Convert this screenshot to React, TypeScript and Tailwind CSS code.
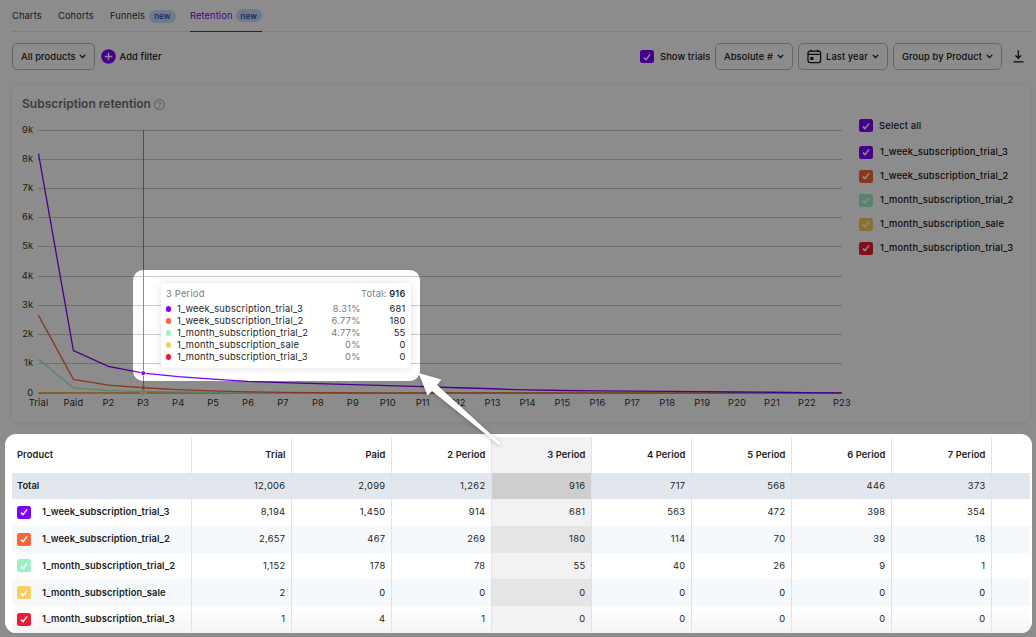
import clsx from "clsx";

type Series = {
  name: string;
  box: string;
  stroke: string;
  share: string;
  values: number[];
};

const SERIES: Series[] = [
  {
    name: "1_week_subscription_trial_3",
    box: "bg-[#7f00ff]",
    stroke: "#7f00ff",
    share: "8.31%",
    values: [
      8194, 1450, 914, 681, 563, 472, 398, 354, 320, 285, 250, 215, 180, 145, 105, 85, 72, 62, 55, 48, 35, 25, 15, 5,
    ],
  },
  {
    name: "1_week_subscription_trial_2",
    box: "bg-[#fb6636]",
    stroke: "#fb6636",
    share: "6.77%",
    values: [2657, 467, 269, 180, 114, 70, 39, 18, 8, 0, 0, 0, 0, 0, 0, 0, 0, 0, 0, 0, 0, 0, 0, 0],
  },
  {
    name: "1_month_subscription_trial_2",
    box: "bg-[#9eefc8]",
    stroke: "#9eefc8",
    share: "4.77%",
    values: [1152, 178, 78, 55, 40, 26, 9, 1, 0, 0, 0, 0, 0, 0, 0, 0, 0, 0, 0, 0, 0, 0, 0, 0],
  },
  {
    name: "1_month_subscription_sale",
    box: "bg-[#f8cf5a]",
    stroke: "#f8cf5a",
    share: "0%",
    values: [2, 0, 0, 0, 0, 0, 0, 0, 0, 0, 0, 0, 0, 0, 0, 0, 0, 0, 0, 0, 0, 0, 0, 0],
  },
  {
    name: "1_month_subscription_trial_3",
    box: "bg-[#ed1b34]",
    stroke: "#ed1b34",
    share: "0%",
    values: [1, 4, 1, 0, 0, 0, 0, 0, 0, 0, 0, 0, 0, 0, 0, 0, 0, 0, 0, 0, 0, 0, 0, 0],
  },
];

const TOTALS = ["12,006", "2,099", "1,262", "916", "717", "568", "446", "373"];
const COLUMNS = ["Trial", "Paid", "2 Period", "3 Period", "4 Period", "5 Period", "6 Period", "7 Period"];
const ACTIVE = 3;

function Checkbox({ color }: { color: string }) {
  return (
    <span className={clsx("flex h-[13px] w-[14px] shrink-0 items-center justify-center rounded-[2.5px]", color)}>
      <svg width="8" height="8" viewBox="0 0 8 8" fill="none">
        <path d="M0.9 4.6 L3 6.6 L7.1 1.4" stroke="white" strokeWidth="1.5" />
      </svg>
    </span>
  );
}

function Chevron() {
  return (
    <svg width="7" height="5" viewBox="0 0 7 5" fill="none">
      <path d="M0.8 0.9 L3.5 3.6 L6.2 0.9" stroke="#161616" strokeWidth="1.3" />
    </svg>
  );
}

function NewBadge() {
  return (
    <span className="flex h-[13px] w-[26.5px] items-center justify-center rounded-full bg-[#c9dfff] text-[8px] font-medium tracking-[0.1px] text-[#1b3fae]">
      new
    </span>
  );
}

function Tabs() {
  return (
    <nav className="mr-[6px] ml-3 flex h-8 border-b border-[#e6e6e6] text-[9.33px] tracking-[0.1px] text-[#333]">
      <span className="flex h-8 w-[46px] items-center">Charts</span>
      <span className="flex h-8 w-[52px] items-center">Cohorts</span>
      <span className="flex h-8 w-[80px] items-center gap-1">
        Funnels <NewBadge />
      </span>
      <span className="flex h-8 w-[72px] items-center justify-between border-b border-[#7f00ff] text-[#7f00ff]">
        Retention <NewBadge />
      </span>
    </nav>
  );
}

const BUTTON =
  "flex h-[27px] items-center justify-between rounded-[5px] border border-[#b9bbbf] px-2 font-medium whitespace-nowrap";

function Toolbar() {
  return (
    <div className="mt-[11px] mr-[6px] ml-3 flex h-[27px] items-center text-[9.33px] font-medium tracking-[0.1px] text-[#161616]">
      <button className={clsx(BUTTON, "w-[83px]")}>
        All products <Chevron />
      </button>
      <svg className="ml-[5.5px]" width="15" height="15" viewBox="0 0 15 15">
        <circle cx="7.5" cy="7.5" r="7.3" fill="#7f00ff" />
        <path d="M7.5 3.7 V11.3 M3.7 7.5 H11.3" stroke="white" strokeWidth="1.4" />
      </svg>
      <span className="ml-1">Add filter</span>

      <div className="ml-auto flex items-center">
        <Checkbox color="bg-[#7f00ff]" />
        <span className="w-[61px] pl-[6px]">Show trials</span>
        <button className={clsx(BUTTON, "w-[78px]")}>
          Absolute # <Chevron />
        </button>
        <button className={clsx(BUTTON, "ml-[5px] w-[90px]")}>
          <svg width="15" height="15" viewBox="0 0 15 15" fill="none" stroke="#161616" strokeWidth="1.3">
            <rect x="1" y="2.2" width="12.6" height="11.4" rx="2" />
            <path d="M1 5.4 H13.6 M4 0.8 V3 M10.6 0.8 V3" />
            <rect x="3.4" y="8" width="3" height="3" fill="#161616" stroke="none" />
          </svg>
          Last year <Chevron />
        </button>
        <button className={clsx(BUTTON, "ml-[5px] w-[109px]")}>
          Group by Product <Chevron />
        </button>
        <svg className="mr-[6px] ml-[11px]" width="11" height="13" viewBox="0 0 11 13" fill="none">
          <path d="M5.3 0.3 V8 M2.4 5.4 L5.3 8.3 L8.2 5.4 M0.5 11.9 H10.5" stroke="#161616" strokeWidth="1.3" />
        </svg>
      </div>
    </div>
  );
}

const STEP = 34.93;
const px = (i: number) => 26.5 + i * STEP;
const py = (v: number) => 274 - (v / 1000) * 29.22;

function Chart() {
  const labels = ["Trial", "Paid", ...Array.from({ length: 22 }, (_, i) => `P${i + 2}`)];
  return (
    <svg
      width="846"
      height="302"
      viewBox="0 0 846 302"
      className="shrink-0 font-[Inter,sans-serif] text-[9.33px] tracking-[0.15px]"
      fill="#333"
    >
      {Array.from({ length: 10 }, (_, k) => {
        const y = Math.floor(py(k * 1000)) + 0.5;
        return (
          <g key={k}>
            <path d={`M26 ${y} H830`} stroke="#cbcbcb" />
            <text x="21.3" y={y + 2.9} textAnchor="end">
              {k === 0 ? "0" : `${k}k`}
            </text>
          </g>
        );
      })}
      {labels.map((label, i) => (
        <text key={label} x={px(i)} y="287" textAnchor="middle">
          {label}
        </text>
      ))}
      <path d={`M131.5 11 V274`} stroke="#8c8c8c" />
      {[...SERIES].reverse().map((s) => (
        <polyline
          key={s.name}
          points={s.values.map((v, i) => `${px(i)},${py(v)}`).join(" ")}
          fill="none"
          stroke={s.stroke}
          strokeWidth="1.3"
        />
      ))}
      {[...SERIES].reverse().map((s) => (
        <circle key={s.name} cx={px(3)} cy={py(s.values[3])} r="2.4" fill={s.stroke} stroke="white" strokeWidth="0.8" />
      ))}
    </svg>
  );
}

function Legend() {
  return (
    <div className="ml-[1px] flex flex-col text-[9.33px] font-medium tracking-[0.2px] text-[#161616]">
      <div className="flex h-[13px] items-center gap-[6px]">
        <Checkbox color="bg-[#7f00ff]" />
        Select all
      </div>
      <div className="mt-[8px] flex flex-col">
        {SERIES.map((s) => (
          <div key={s.name} className="flex h-6 items-center gap-[7px]">
            <Checkbox color={s.box} />
            {s.name}
          </div>
        ))}
      </div>
    </div>
  );
}

function ChartTooltip() {
  return (
    <div className="absolute top-[283px] left-[161px] h-[85px] w-[250px] rounded-[4px] bg-white pt-[5px] pr-[5.5px] pl-[5px] text-[9.33px] tracking-[0.2px] text-[#222] shadow-[0_0_8px_rgba(0,0,0,0.12)]">
      <div className="flex h-3 items-center justify-between text-[#7a7a7a]">
        <span>3 Period</span>
        <span>
          Total: <span className="font-medium text-[#161616]">916</span>
        </span>
      </div>
      <div className="mt-[3px]">
        {SERIES.map((s) => (
          <div key={s.name} className="flex h-3 items-center">
            <span className={clsx("mr-[6px] h-[6px] w-[5px] rounded-full", s.box)} />
            <span className="flex-1">{s.name}</span>
            <span className="text-[#7a7a7a]">{s.share}</span>
            <span className="w-[45px] text-right">{s.values[ACTIVE]}</span>
          </div>
        ))}
      </div>
    </div>
  );
}

const CELL = "w-[100px] shrink-0 border-r border-[#e3e3e3] pr-[5.5px] flex items-center justify-end";

function RetentionTable() {
  return (
    <div className="mr-[4px] ml-[5px] h-[199px] overflow-hidden rounded-[11px] bg-white pr-[2px] pl-[7px] pt-[3px] text-[9.33px] text-[#222]">
      <div className="flex h-9 font-semibold tracking-[0.1px]">
        <div className="flex w-[180px] shrink-0 items-center border-r border-[#e3e3e3] pl-[5px]">Product</div>
        {COLUMNS.map((c, i) => (
          <div key={c} className={clsx(CELL, i === ACTIVE && "bg-[#f2f2f2]")}>
            {c}
          </div>
        ))}
      </div>
      <div className="flex h-[26px] bg-[#e2e7ee]">
        <div className="flex w-[180px] shrink-0 items-center pl-[5px] font-semibold">Total</div>
        {TOTALS.map((t, i) => (
          <div
            key={t}
            className={clsx(
              "flex w-[100px] shrink-0 items-center justify-end border-r border-[#e0e4ea] pr-[5.5px] tracking-[0.35px]",
              i === ACTIVE && "bg-[#cecece]",
            )}
          >
            {t}
          </div>
        ))}
      </div>
      {SERIES.map((s, row) => (
        <div
          key={s.name}
          className={clsx(
            "flex h-[26.75px]",
            row % 2 === 1 && "bg-[#f5f9fc]",
            row === 4 && "bg-linear-to-b from-white to-[#f5f5f5]",
          )}
        >
          <div className="flex w-[180px] shrink-0 items-center gap-[11px] border-r border-[#e3e3e3] pl-[5px] font-semibold tracking-[0.1px]">
            <Checkbox color={s.box} />
            {s.name}
          </div>
          {COLUMNS.map((c, i) => (
            <div
              key={c}
              className={clsx(CELL, "tracking-[0.35px]", i === ACTIVE && (row % 2 ? "bg-[#e5e5e5]" : "bg-[#f2f2f2]"))}
            >
              {s.values[i].toLocaleString("en-US")}
            </div>
          ))}
        </div>
      ))}
    </div>
  );
}

export default function App() {
  return (
    <div className="relative h-[637px] w-[1036px] overflow-hidden bg-[#8c8c8c] font-[Inter,sans-serif]">
      <div className="relative h-[434px] overflow-hidden bg-white">
        <Tabs />
        <Toolbar />
        <section className="mt-[15px] mr-[6px] ml-3 h-[337px] rounded-[5px] bg-white pt-3 shadow-[0_0_6px_rgba(0,0,0,0.1)]">
          <h2 className="flex h-[14px] items-center gap-[3px] pl-[10px] text-[12px] font-semibold text-[#6f6f6f]">
            Subscription retention
            <svg width="11" height="11" viewBox="0 0 11 11" fill="none" stroke="#9a9a9a" strokeWidth="0.9">
              <circle cx="5.5" cy="5.5" r="4.9" />
              <path d="M4 4.4 C4 2.5 7 2.5 7 4.3 C7 5.4 5.5 5.3 5.5 6.6 M5.5 7.4 V8.4" />
            </svg>
          </h2>
          <div className="mt-[8px] flex">
            <Chart />
            <Legend />
          </div>
        </section>
        {/* dims everything around the tooltip */}
        <div className="absolute top-[270px] left-[133px] h-[111px] w-[287px] rounded-[10px] shadow-[0_0_0_1200px_rgba(0,0,0,0.45)]" />
        <ChartTooltip />
      </div>
      <RetentionTable />
      <svg
        className="absolute top-[365px] left-[410px] drop-shadow-[0_1px_2px_rgba(0,0,0,0.25)]"
        width="100"
        height="90"
        viewBox="0 0 100 90"
        fill="white"
      >
        <path d="M8.5 8 L31.5 14.5 L27 20 L90.5 78 Q90 80 88.5 79.5 L22 26 L17.5 30.5 Z" />
      </svg>
    </div>
  );
}
